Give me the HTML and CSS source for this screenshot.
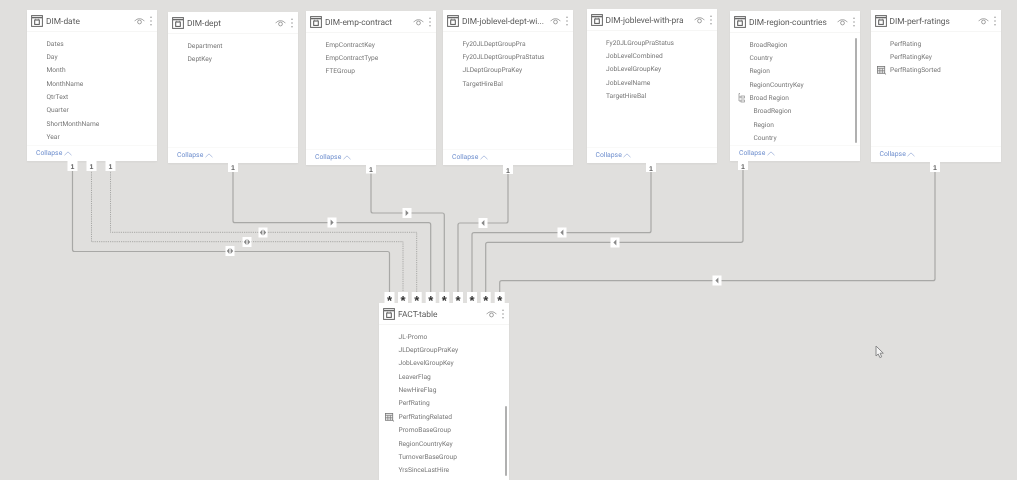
FILE: index.html
```html
<!DOCTYPE html>
<html lang="en">
<head>
<meta charset="utf-8">
<title>Model view</title>
<link rel="stylesheet" href="styles.css">
</head>
<body>
<svg class="defs" width="0" height="0" aria-hidden="true">
  <symbol id="i-table" viewBox="0 0 12 12">
    <rect x=".6" y=".6" width="10.8" height="10.8" fill="none" stroke="#666" stroke-width="1"/>
    <path d="M1 2.6h10" stroke="#666" stroke-width="1.4"/>
    <rect x="3.7" y="5" width="4.6" height="4.4" fill="none" stroke="#555" stroke-width="1"/>
    <path d="M4.6 4.6V3.8M7.4 4.6V3.8" stroke="#555" stroke-width=".8"/>
  </symbol>
  <symbol id="i-eye" viewBox="0 0 11 8">
    <path d="M.6 4.2C3 .9 8 .9 10.4 4.2" fill="none" stroke="#8a8a8a" stroke-width=".8"/>
    <circle cx="5.5" cy="5" r="1.9" fill="none" stroke="#8a8a8a" stroke-width=".8"/>
  </symbol>
  <symbol id="i-dots" viewBox="0 0 2 10">
    <circle cx="1" cy="1.2" r=".7" fill="#888"/>
    <circle cx="1" cy="5" r=".7" fill="#888"/>
    <circle cx="1" cy="8.8" r=".7" fill="#888"/>
  </symbol>
  <symbol id="i-chev" viewBox="0 0 8 5">
    <path d="M.5 4.2 4 .9l3.5 3.3" fill="none" stroke="#9fb2da" stroke-width=".8"/>
  </symbol>
  <symbol id="i-calc" viewBox="0 0 11 10">
    <rect x=".5" y=".5" width="8" height="7.6" fill="#eee" stroke="#777" stroke-width=".9"/>
    <path d="M.5 2.6h8M3.1 2.6v5.5M5.9 2.6v5.5M.5 5.3h8" stroke="#777" stroke-width=".8"/>
    <path d="M8 7.6l2 1.8" stroke="#777" stroke-width="1"/>
  </symbol>
  <symbol id="i-hier" viewBox="0 0 7 10">
    <path d="M1 .5h1M1 .5v7.5h2M1 4h2" fill="none" stroke="#888" stroke-width=".7"/>
    <rect x="3" y="3" width="3.4" height="2" fill="none" stroke="#888" stroke-width=".7"/>
    <rect x="3" y="7" width="3.4" height="2" fill="none" stroke="#888" stroke-width=".7"/>
  </symbol>
  <symbol id="m-right" viewBox="0 0 8 8"><path d="M2.6 1v6L5.6 4z" fill="#888"/></symbol>
  <symbol id="m-left" viewBox="0 0 8 8"><path d="M5.4 1v6L2.4 4z" fill="#888"/></symbol>
  <symbol id="m-both" viewBox="0 0 8 8"><path d="M3.4 1v6L.8 4zM4.6 1v6l2.6-3z" fill="#888"/></symbol>
</svg>

<main class="canvas">
  <svg class="links" width="1017" height="480" viewBox="0 0 1017 480">
    <g class="line">
      <path d="M72.5 170V249.5q0 2 2 2H387.5q2 0 2 2V294"/>
      <path d="M233 170V220.7q0 2 2 2H428.7q2 0 2 2V294"/>
      <path d="M371 172V211q0 2 2 2H442.3q2 0 2 2V294"/>
      <path d="M508 172V221q0 2-2 2H460q-2 0-2 2V294"/>
      <path d="M651 170V230.7q0 2-2 2H474q-2 0-2 2V294"/>
      <path d="M743 170V240.3q0 2-2 2H487.7q-2 0-2 2V294"/>
      <path d="M935 170V278.7q0 2-2 2H501.7q-2 0-2 2V294"/>
    </g>
    <g class="line dotted">
      <path d="M91.5 170V241.7H403V294"/>
      <path d="M110.5 170V232.3H416.7V294"/>
    </g>

    <g class="mark">
      <rect x="225.5" y="246" width="9" height="10"/><use href="#m-both" x="226" y="247" width="8" height="8"/>
      <rect x="242.5" y="237" width="9" height="10"/><use href="#m-both" x="243" y="238" width="8" height="8"/>
      <rect x="258.5" y="227.5" width="9" height="10"/><use href="#m-both" x="259" y="228.5" width="8" height="8"/>
      <rect x="327.5" y="217.5" width="9" height="10"/><use href="#m-right" x="328" y="218.5" width="8" height="8"/>
      <rect x="402.5" y="208" width="9" height="10"/><use href="#m-right" x="403" y="209" width="8" height="8"/>
      <rect x="478.5" y="218" width="9" height="10"/><use href="#m-left" x="479" y="219" width="8" height="8"/>
      <rect x="557.5" y="227.5" width="9" height="10"/><use href="#m-left" x="558" y="228.5" width="8" height="8"/>
      <rect x="610.5" y="237.5" width="9" height="10"/><use href="#m-left" x="611" y="238.5" width="8" height="8"/>
      <rect x="712.5" y="275.5" width="9" height="10"/><use href="#m-left" x="713" y="276.5" width="8" height="8"/>
    </g>

    <g class="one">
      <rect x="67.5" y="161" width="10" height="10"/><text x="72.5" y="169">1</text>
      <rect x="86.5" y="161" width="10" height="10"/><text x="91.5" y="169">1</text>
      <rect x="105.5" y="161" width="10" height="10"/><text x="110.5" y="169">1</text>
      <rect x="228" y="162" width="10" height="10"/><text x="233" y="170">1</text>
      <rect x="366" y="164.5" width="10" height="9"/><text x="371" y="172">1</text>
      <rect x="503" y="165" width="10" height="9"/><text x="508" y="172.5">1</text>
      <rect x="646" y="163" width="10" height="9"/><text x="651" y="170.5">1</text>
      <rect x="738" y="161" width="10" height="9"/><text x="743" y="168.5">1</text>
      <rect x="930" y="162" width="10" height="10"/><text x="935" y="170">1</text>
    </g>

    <g class="many">
      <rect x="384.5" y="292" width="10" height="11"/><text x="389.5" y="304.5">*</text>
      <rect x="398" y="292" width="10" height="11"/><text x="403" y="304.5">*</text>
      <rect x="411.7" y="292" width="10" height="11"/><text x="416.7" y="304.5">*</text>
      <rect x="425.7" y="292" width="10" height="11"/><text x="430.7" y="304.5">*</text>
      <rect x="439.3" y="292" width="10" height="11"/><text x="444.3" y="304.5">*</text>
      <rect x="453" y="292" width="10" height="11"/><text x="458" y="304.5">*</text>
      <rect x="467" y="292" width="10" height="11"/><text x="472" y="304.5">*</text>
      <rect x="480.7" y="292" width="10" height="11"/><text x="485.7" y="304.5">*</text>
      <rect x="494.7" y="292" width="10" height="11"/><text x="499.7" y="304.5">*</text>
    </g>
  </svg>

  <section class="card card-date">
    <header class="head">
      <svg class="ico-table"><use href="#i-table"/></svg>
      <h2 class="title">DIM-date</h2>
      <svg class="ico-eye"><use href="#i-eye"/></svg>
      <svg class="ico-dots"><use href="#i-dots"/></svg>
    </header>
    <ul class="fields">
      <li>Dates</li><li>Day</li><li>Month</li><li>MonthName</li><li>QtrText</li><li>Quarter</li><li>ShortMonthName</li><li>Year</li>
    </ul>
    <footer class="foot">Collapse<svg class="ico-chev"><use href="#i-chev"/></svg></footer>
  </section>

  <section class="card card-dept">
    <header class="head">
      <svg class="ico-table"><use href="#i-table"/></svg>
      <h2 class="title">DIM-dept</h2>
      <svg class="ico-eye"><use href="#i-eye"/></svg>
      <svg class="ico-dots"><use href="#i-dots"/></svg>
    </header>
    <ul class="fields">
      <li>Department</li><li>DeptKey</li>
    </ul>
    <footer class="foot">Collapse<svg class="ico-chev"><use href="#i-chev"/></svg></footer>
  </section>

  <section class="card card-emp">
    <header class="head">
      <svg class="ico-table"><use href="#i-table"/></svg>
      <h2 class="title">DIM-emp-contract</h2>
      <svg class="ico-eye"><use href="#i-eye"/></svg>
      <svg class="ico-dots"><use href="#i-dots"/></svg>
    </header>
    <ul class="fields">
      <li>EmpContractKey</li><li>EmpContractType</li><li>FTEGroup</li>
    </ul>
    <footer class="foot">Collapse<svg class="ico-chev"><use href="#i-chev"/></svg></footer>
  </section>

  <section class="card card-jld">
    <header class="head">
      <svg class="ico-table"><use href="#i-table"/></svg>
      <h2 class="title">DIM-joblevel-dept-wi...</h2>
      <svg class="ico-eye"><use href="#i-eye"/></svg>
      <svg class="ico-dots"><use href="#i-dots"/></svg>
    </header>
    <ul class="fields">
      <li>Fy20JLDeptGroupPra</li><li>Fy20JLDeptGroupPraStatus</li><li>JLDeptGroupPraKey</li><li>TargetHireBal</li>
    </ul>
    <footer class="foot">Collapse<svg class="ico-chev"><use href="#i-chev"/></svg></footer>
  </section>

  <section class="card card-jlp">
    <header class="head">
      <svg class="ico-table"><use href="#i-table"/></svg>
      <h2 class="title">DIM-joblevel-with-pra</h2>
      <svg class="ico-eye"><use href="#i-eye"/></svg>
      <svg class="ico-dots"><use href="#i-dots"/></svg>
    </header>
    <ul class="fields">
      <li>Fy20JLGroupPraStatus</li><li>JobLevelCombined</li><li>JobLevelGroupKey</li><li>JobLevelName</li><li>TargetHireBal</li>
    </ul>
    <footer class="foot">Collapse<svg class="ico-chev"><use href="#i-chev"/></svg></footer>
  </section>

  <section class="card card-region">
    <header class="head">
      <svg class="ico-table"><use href="#i-table"/></svg>
      <h2 class="title">DIM-region-countries</h2>
      <svg class="ico-eye"><use href="#i-eye"/></svg>
      <svg class="ico-dots"><use href="#i-dots"/></svg>
    </header>
    <ul class="fields">
      <li>BroadRegion</li><li>Country</li><li>Region</li><li>RegionCountryKey</li>
      <li><svg class="ico-hier"><use href="#i-hier"/></svg>Broad Region</li>
      <li class="sub">BroadRegion</li><li class="sub">Region</li><li class="sub">Country</li>
    </ul>
    <div class="scroll scroll-region"></div>
    <footer class="foot">Collapse<svg class="ico-chev"><use href="#i-chev"/></svg></footer>
  </section>

  <section class="card card-perf">
    <header class="head">
      <svg class="ico-table"><use href="#i-table"/></svg>
      <h2 class="title">DIM-perf-ratings</h2>
      <svg class="ico-eye"><use href="#i-eye"/></svg>
      <svg class="ico-dots"><use href="#i-dots"/></svg>
    </header>
    <ul class="fields">
      <li>PerfRating</li><li>PerfRatingKey</li>
      <li><svg class="ico-calc"><use href="#i-calc"/></svg>PerfRatingSorted</li>
    </ul>
    <footer class="foot">Collapse<svg class="ico-chev"><use href="#i-chev"/></svg></footer>
  </section>

  <section class="card card-fact">
    <header class="head">
      <svg class="ico-table"><use href="#i-table"/></svg>
      <h2 class="title">FACT-table</h2>
      <svg class="ico-eye"><use href="#i-eye"/></svg>
      <svg class="ico-dots"><use href="#i-dots"/></svg>
    </header>
    <ul class="fields">
      <li>JL-Promo</li><li>JLDeptGroupPraKey</li><li>JobLevelGroupKey</li><li>LeaverFlag</li><li>NewHireFlag</li><li>PerfRating</li>
      <li><svg class="ico-calc"><use href="#i-calc"/></svg>PerfRatingRelated</li>
      <li>PromoBaseGroup</li><li>RegionCountryKey</li><li>TurnoverBaseGroup</li><li>YrsSinceLastHire</li>
    </ul>
    <div class="scroll scroll-fact"></div>
  </section>

  <svg class="cursor" width="11" height="14" viewBox="0 0 11 14">
    <path d="M1 1v10l2.2-2 1.7 3.6 1.8-.8-1.6-3.6h3.2z" fill="#f4f4f4" stroke="#888" stroke-width="1"/>
  </svg>
</main>
</body>
</html>
```
FILE: styles.css
```css
* { box-sizing: border-box; }
html, body { margin: 0; padding: 0; background: #e0dfdd; }
.defs { position: absolute; }

.canvas {
  position: relative;
  width: 1017px;
  height: 480px;
  overflow: hidden;
  background: #e0dfdd;
  font-family: Roboto, "Open Sans", sans-serif;
  text-rendering: geometricPrecision;
  filter: blur(0.5px);
}

.links { position: absolute; left: 0; top: 0; z-index: 2; pointer-events: none; }
.line path { fill: none; stroke: #a8a8a6; stroke-width: 1.2; }
.line.dotted path { stroke-width: 1; stroke-dasharray: 1.2 1; }
.mark rect, .one rect, .many rect { fill: #fff; }
.one text { font: 700 7px "Liberation Sans", sans-serif; fill: #666; text-anchor: middle; }
.many text { font: 700 13px "Liberation Sans", sans-serif; fill: #333; text-anchor: middle; }

.card {
  position: absolute;
  z-index: 1;
  width: 130px;
  display: flex;
  flex-direction: column;
  background: #fff;
  box-shadow: 0 1px 2px rgba(0, 0, 0, .05);
}
.card-date   { left: 27px;  top: 10px;  height: 151px; }
.card-dept   { left: 168px; top: 12px;  height: 151px; }
.card-emp    { left: 306px; top: 11px;  height: 154px; }
.card-jld    { left: 443px; top: 10px;  height: 155px; }
.card-jlp    { left: 586.5px; top: 9px; height: 154px; }
.card-region { left: 730px; top: 11px;  height: 150px; }
.card-perf   { left: 870.5px; top: 10px; height: 152px; }
.card-fact   { left: 379px; top: 303px; height: 190px; }

.head {
  flex: none;
  height: 22px;
  display: flex;
  align-items: center;
  padding: 0 5px 0 4px;
  border-bottom: 1px solid #f6f6f5;
}
.ico-table { width: 12px; height: 12px; flex: none; margin-right: 3px; }
.title {
  flex: 1;
  min-width: 0;
  margin: 0;
  padding-top: 2px;
  font-size: 8.4px;
  font-weight: 400;
  color: #5c5c5c;
  white-space: nowrap;
  overflow: hidden;
}
.ico-eye { width: 11px; height: 8px; flex: none; margin-left: 2px; }
.ico-dots { width: 2px; height: 10px; flex: none; margin-left: 5px; }

.fields {
  flex: 1;
  min-height: 0;
  overflow: hidden;
  list-style: none;
  margin: 0;
  padding: 5.5px 0 0 19.5px;
  font-size: 6.65px;
  color: #777;
}
.fields li {
  position: relative;
  height: 13.4px;
  line-height: 13.4px;
  white-space: nowrap;
}
.fields li.sub { padding-left: 4px; }
.ico-hier { position: absolute; left: -11.5px; top: 1px; width: 7px; height: 10px; }
.ico-calc { position: absolute; left: -13.5px; top: 2px; width: 10px; height: 9px; }

.foot {
  flex: none;
  height: 16px;
  display: flex;
  align-items: center;
  padding: 0 0 1px 9px;
  border-top: 1px solid #f9f9f8;
  font-size: 6.8px;
  color: #6f8fce;
}
.ico-chev { width: 8px; height: 5px; margin-left: 1.5px; }

.scroll {
  position: absolute;
  width: 2px;
  background: #b0b0b0;
  border-radius: 1px;
}
.scroll-region { left: 125px; top: 27px; height: 105px; }
.scroll-fact { left: 125.5px; top: 103px; height: 70px; }

.cursor { position: absolute; left: 875px; top: 345px; z-index: 3; }
```
